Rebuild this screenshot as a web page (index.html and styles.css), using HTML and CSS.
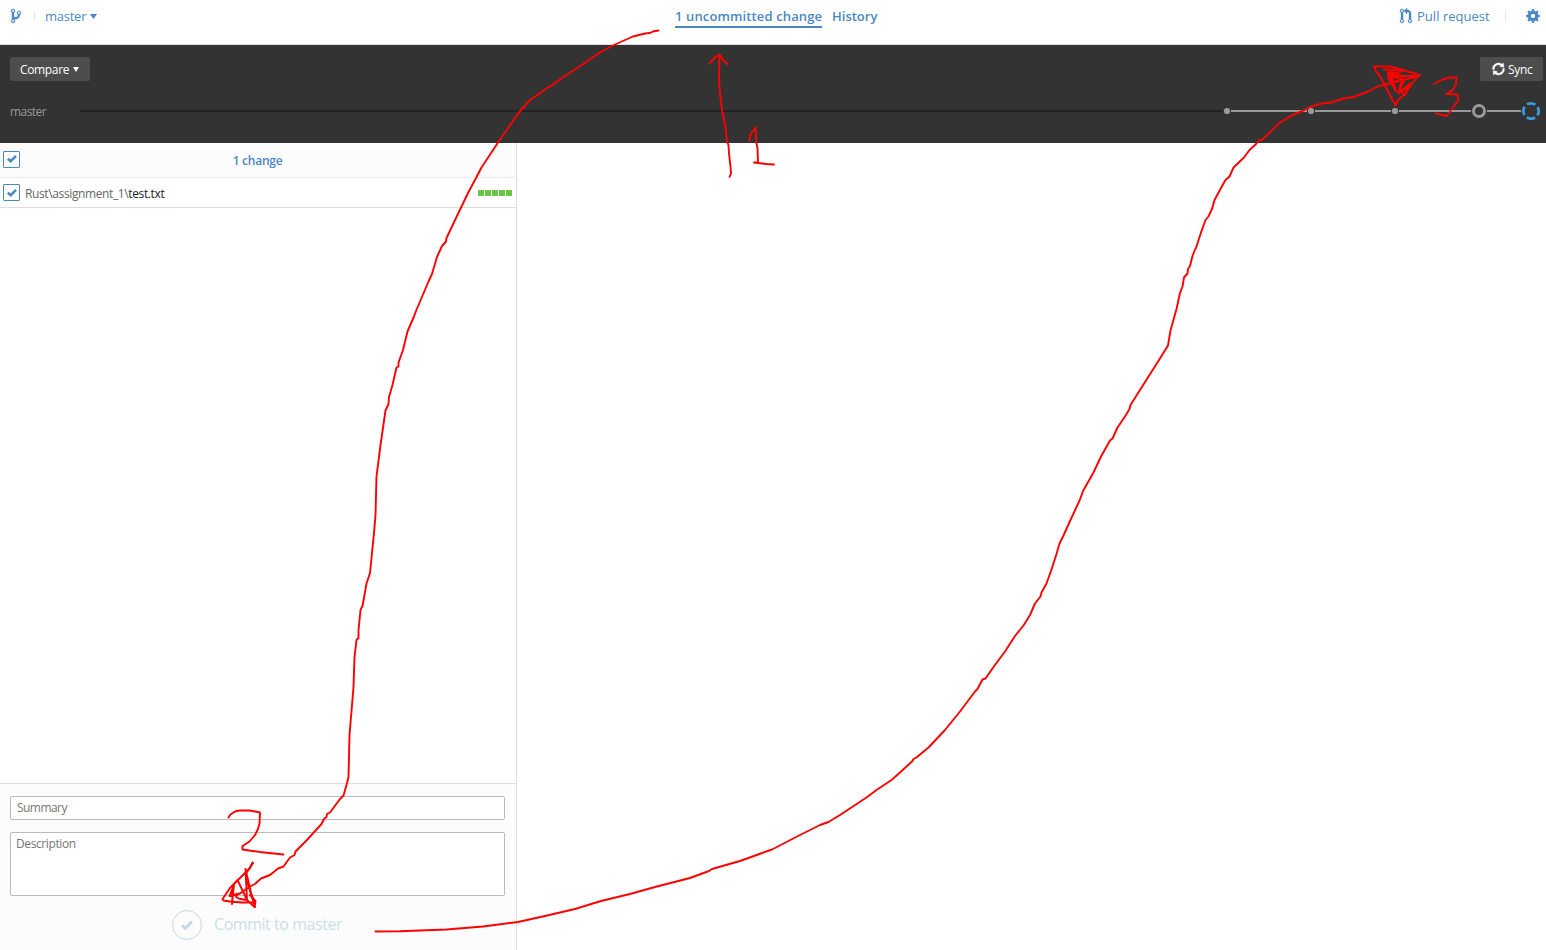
FILE: index.html
```html
<!DOCTYPE html>
<html lang="en">
<head>
<meta charset="utf-8">
<title>Changes</title>
<link rel="stylesheet" href="styles.css">
</head>
<body>
<div class="app">
  <header class="topbar">
    <div class="topbar-left">
      <svg class="icon-branch" viewBox="0 0 10 16" width="10" height="16"><path d="M10 5c0-1.11-.89-2-2-2a1.993 1.993 0 0 0-1 3.72v.3c-.02.52-.23.98-.63 1.38-.4.4-.86.61-1.38.63-.83.02-1.48.16-2 .45V4.72a1.993 1.993 0 0 0-1-3.72C.88 1 0 1.89 0 3a2 2 0 0 0 1 1.72v6.56c-.59.35-1 .99-1 1.72 0 1.11.89 2 2 2 1.11 0 2-.89 2-2 0-.53-.2-1-.53-1.36.09-.06.48-.41.59-.47.25-.11.56-.17.94-.17 1.05-.05 1.95-.45 2.75-1.25S8.95 7.77 9 6.73h-.02C9.59 6.37 10 5.73 10 5zM2 1.8c.66 0 1.2.55 1.2 1.2 0 .65-.55 1.2-1.2 1.2C1.35 4.2.8 3.65.8 3c0-.65.55-1.2 1.2-1.2zm0 12.41c-.66 0-1.2-.55-1.2-1.2 0-.65.55-1.2 1.2-1.2.65 0 1.2.55 1.2 1.2 0 .65-.55 1.2-1.2 1.2zm6-8c-.66 0-1.2-.55-1.2-1.2 0-.65.55-1.2 1.2-1.2.65 0 1.2.55 1.2 1.2 0 .65-.55 1.2-1.2 1.2z"/></svg>
      <span class="divider"></span>
      <span class="branch-name">master</span>
      <svg class="caret" viewBox="0 0 7 5" width="7" height="5"><path d="M0 0h7L3.500 5z"/></svg>
    </div>
    <nav class="tabs">
      <span class="tab tab-active">1 uncommitted change</span>
      <span class="tab tab-history">History</span>
    </nav>
    <div class="topbar-right">
      <svg class="icon-pull" viewBox="0 0 12 16" width="12" height="16"><path d="M11 11.28V5c-.03-.78-.34-1.47-.94-2.06C9.46 2.35 8.780 2.030 8 2H7V0L4 3l3 3V4h1c.27.02.48.11.69.31.21.2.3.42.31.69v6.28A1.993 1.993 0 0 0 10 15a1.993 1.993 0 0 0 1-3.72zm-1 2.92c-.66 0-1.2-.55-1.2-1.2 0-.65.55-1.2 1.2-1.2.65 0 1.2.55 1.2 1.2 0 .65-.55 1.2-1.2 1.2zM4 3c0-1.11-.89-2-2-2a1.993 1.993 0 0 0-1 3.72v6.56A1.993 1.993 0 0 0 2 15a1.993 1.993 0 0 0 1-3.72V4.72c.59-.34 1-.98 1-1.72zm-.8 10c0 .66-.55 1.2-1.2 1.2-.65 0-1.2-.55-1.2-1.2 0-.65.55-1.2 1.2-1.2.65 0 1.2.55 1.2 1.2zM2 4.2C1.34 4.2.8 3.65.8 3c0-.65.55-1.2 1.2-1.2.65 0 1.2.55 1.2 1.2 0 .65-.55 1.2-1.2 1.2z"/></svg>
      <span class="pull-label">Pull request</span>
      <span class="divider"></span>
      <svg class="icon-gear" viewBox="0 0 14 16" width="14" height="16"><path d="M14 8.77v-1.6l-1.94-.64-.45-1.09.88-1.84-1.13-1.13-1.81.91-1.09-.45-.69-1.92h-1.6l-.63 1.94-1.11.45-1.84-.88-1.13 1.13.91 1.81-.45 1.09L0 7.23v1.59l1.94.64.45 1.09-.88 1.84 1.13 1.13 1.81-.91 1.09.45.69 1.92h1.59l.63-1.94 1.11-.45 1.84.88 1.13-1.13-.92-1.81.47-1.09L14 8.75v.02zM7 10.200c-1.210 0-2.200-.990-2.200-2.200s.990-2.200 2.200-2.200 2.200.990 2.200 2.200-.990 2.200-2.200 2.200z"/></svg>
    </div>
  </header>

  <section class="timeline">
    <div class="timeline-actions">
      <div class="btn btn-compare"><span>Compare</span><svg viewBox="0 0 6 5" width="6" height="5"><path d="M0 0h6L3 5z"/></svg></div>
      <div class="btn btn-sync"><svg class="icon-sync" viewBox="0 0 12 16" width="13" height="16"><path d="M10.24 7.4a4.15 4.15 0 0 1-1.2 3.6 4.346 4.346 0 0 1-5.41.54L4.8 10.4.5 9.8l.6 4.2 1.31-1.26c2.36 1.74 5.7 1.57 7.84-.54a5.876 5.876 0 0 0 1.74-4.46l-1.75-.34zM2.96 5a4.346 4.346 0 0 1 5.41-.54L7.2 5.6l4.3.6-.6-4.2-1.31 1.26c-2.36-1.74-5.7-1.57-7.85.54C.5 5.03-.06 6.65.01 8.26l1.75.35A4.170 4.170 0 0 1 2.96 5z"/></svg><span>Sync</span></div>
    </div>
    <div class="timeline-row">
      <span class="timeline-label">master</span>
      <svg class="graph" viewBox="80 0 1466 22" width="1466" height="22">
        <path class="rail" d="M80 11H1223"/>
        <path class="link" d="M1231 11H1307M1315 11H1391M1399 11H1471M1487 11H1521"/>
        <circle class="dot" cx="1227" cy="11" r="3.100"/>
        <circle class="dot" cx="1311" cy="11" r="3.100"/>
        <circle class="dot" cx="1395" cy="11" r="3.100"/>
        <circle class="head" cx="1479" cy="11" r="5.500"/>
        <circle class="pending" cx="1531" cy="11" r="7.700"/>
      </svg>
    </div>
  </section>

  <main class="content">
    <aside class="sidebar">
      <div class="list-head">
        <span class="checkbox"><svg viewBox="0 0 10 8" width="10" height="8"><path d="M.8 3.800L3.700 6.200 9 .9"/></svg></span>
        <span class="count">1 change</span>
      </div>
      <div class="file-row">
        <span class="checkbox"><svg viewBox="0 0 10 8" width="10" height="8"><path d="M.8 3.800L3.700 6.200 9 .9"/></svg></span>
        <span class="path"><span class="dir">Rust\assignment_1\</span><span class="file">test.txt</span></span>
        <span class="diffstat"><i></i><i></i><i></i><i></i><i></i></span>
      </div>
      <div class="list-space"></div>
      <form class="commit">
        <div class="field summary">Summary</div>
        <div class="field description">Description</div>
        <div class="commit-action">
          <span class="commit-circle"><svg viewBox="0 0 12 10" width="12" height="10"><path d="M1 5.300L4.400 8.300 11 1.500"/></svg></span>
          <span class="commit-label">Commit to master</span>
        </div>
      </form>
    </aside>
    <div class="diff"></div>
  </main>

  <svg class="ink" viewBox="0 0 1546 950" width="1546" height="950">
    <polyline points="658.500,30.500 653,31.500 650,33 645,33.500 633,36.500 615,44.500 600.500,52 584,63.500 565,76 553,84.500 548,87.500 529.500,100.500 519,112.500 498,142.500 481.500,167.500 476,178 468,193 456.500,217 446.500,238 446,241.500 442,246 437,257 432,274 428.500,281.500 416,311 414,316.500 407.500,331.500 403,350 398.500,362.500 398.500,366.500 396.500,367.500 392.500,385 389,397 388.500,404 385.500,410.500 380.500,445 376.500,476.500 375.500,515 374,533 370,573 366.500,583.500 362.500,606 360.500,610 358.500,630 358.500,638 356.500,640 354.500,657 353.500,687 349.500,735 348.500,777 346.500,785 343.500,795.500 340,799 330,812.500 327,814 326.500,817 324,819 321.500,824 306.500,840.500 295.500,851.500 294.500,855 290,857.500 283.500,866.500 278,868.500 270,875 261,878.500 255,884 250,886.500 240,893.500 230,896"/>
    <polyline points="228.500,817.500 230.500,814.500 235,811.500 239.500,810.500 250,810.500 260,812.500 259.500,823.500 258,829 255,835 249.500,841.500 242.500,846 242.500,849.500 260,852 283.500,854.500"/>
    <polyline points="252.500,862.500 250,868 245,873 236,882 230,888 222.500,899 223.500,900.500 230,901.500 242,902.500 255,902.500 251,893 245.500,869 246,880 247,900 237.500,880 233,885 232,904 234,885 229.500,896 238,894 236,897 240,899 247,900 254.500,907 255.500,901 250,895"/>
    <polyline points="253,863 249,869 245.500,874 247,881 255,907"/>
    <polyline points="375.500,931.500 400,931.200 446.500,929.500 483,926.500 518,922 545,916 575,909 601,901 630,894 655,887 690,878 709,871 712,869 740,861 772,849.500 800,835 820,825 828.500,822 840,815 866.500,797.500 876.500,790 891.500,780 900,772.500 912.500,761 913.500,759 916.500,757.500 928.500,747.500 945,730 960,711.500 975,691.500 977.500,689 982.500,679.500 985.500,678.500 993.500,667 1005,651.500 1015,636 1023.500,625.500 1030,615 1035,603.500 1040.500,596.500 1041.500,592.500 1046.500,583.500 1051.500,569.500 1056.500,554 1059.500,543.500 1063.500,535.500 1070,521 1080,499.500 1083,491 1093.500,472.500 1101,456.500 1110,440.500 1112.500,438.500 1117.500,427.500 1125,416.500 1129.500,409 1130.500,405 1140,390 1159,360 1164,352 1168,345.500 1170.500,330.500 1176.500,309 1180,293 1182.500,286.500 1184,277.500 1187.500,273.500 1188,269 1190,266 1192.500,256 1195,249.500 1196,248 1201.500,231 1205.500,220 1208.500,216.500 1212.500,207.500 1214.500,200 1220.500,189 1225.500,180 1229.500,176.500 1233.500,167.500 1244,157.500 1249.500,150 1256,144 1259,140.500 1262.500,139.500 1275,127.500 1280,122.500 1293.500,114.500 1302.500,111 1310,107 1321.500,103.500 1331.500,102.500 1343.500,98.500 1353.500,97 1368.500,91.500 1377.500,86.500 1393.500,82.500 1418.500,76"/>
    <polyline points="1420.500,75.500 1406.500,71 1390,66.500 1374,66.500 1376,71.500 1380,76 1395.500,105.500 1398,100 1405,94 1411,85 1417,77"/>
    <polyline points="1383.500,69.500 1403,70.500 1388,76.500 1391,72 1395,90.500 1388,72 1389,80 1396,91 1390,71.500 1403,76.500 1398,93.500 1410,83.500 1405,95 1401,92 1408,87 1399,91 1404,80 1394,82 1401,79 1390,76 1414,76"/>
    <polyline points="1434.500,83.500 1442.500,79.500 1449.500,77.500 1456.500,77.500 1456,85 1452,90.500 1446,94 1457.500,94.500 1458.500,100 1452.500,108.500 1446.500,116 1436,113.500"/>
    <polyline points="729.500,177 731,173.500 730.500,166.500 729,153.500 728.500,145 727,141.500 725.500,126.500 722,110 720,93.500 719,80 719.500,55"/>
    <polyline points="709.500,63.500 715,57.500 719.500,54.500 723.500,60.500 727.500,64"/>
    <polyline points="749.500,141 750,135 755.500,127.500 756.500,143.500 757.500,148 758,162.500 754,162.500 766.500,164 774,164.500"/>
  </svg>
</div>
</body>
</html>
```

FILE: styles.css
```css
* { box-sizing: border-box; }
body { margin: 0; font-family: "Open Sans", "Noto Sans", sans-serif; font-size: 12px; background: #fff; }
svg { display: block; flex: none; }
span { white-space: nowrap; }

.app { position: relative; width: 1546px; height: 950px; overflow: hidden; display: flex; flex-direction: column; }

.topbar { height: 45px; padding-bottom: 12px; border-bottom: 1px solid #ddd; display: grid; grid-template-columns: 675px 1fr auto; color: #4a88c3; fill: #4a88c3; font-size: 13px; line-height: 18px; }
.topbar-left, .topbar-right { display: flex; align-items: center; height: 32px; }
.topbar-left { padding-left: 11px; }
.icon-branch, .icon-pull { stroke: #4a88c3; stroke-width: 0.35; overflow: visible; }
.icon-sync { stroke: #fff; stroke-width: 0.4; overflow: visible; }
.divider { width: 1px; height: 18px; background: linear-gradient(#fff, #ddd, #fff); }
.topbar-left .divider { margin: 0 10px 0 13px; }
.branch-name { width: 42px; letter-spacing: -0.25px; }
.caret { margin-left: 3px; }
.tabs { display: flex; align-items: flex-start; gap: 10px; padding-top: 7px; font-weight: 600; }
.tab { height: 21px; }
.tab-active { width: 147px; border-bottom: 2px solid #4a88c3; letter-spacing: 0.13px; }
.topbar-right { padding-right: 6px; }
.pull-label { width: 73px; margin-left: 5px; letter-spacing: 0.03px; }
.topbar-right .divider { margin: 0 20px 0 15px; }

.timeline { height: 98px; background: #333; padding-top: 12px; flex: none; }
.timeline-actions { display: flex; justify-content: space-between; padding: 0 3px 0 10px; }
.btn { height: 24px; border-radius: 2px; background: #4d4d4d; color: #fff; fill: #fff; display: flex; align-items: center; font-size: 12px; font-weight: 500; }
.btn-compare { width: 80px; padding-left: 10px; gap: 5px; }
.btn-compare span { width: 48px; letter-spacing: -0.35px; }
.btn-sync { width: 63px; padding-left: 12px; gap: 3px; }
.btn-sync span { letter-spacing: -0.3px; }
.timeline-row { display: flex; align-items: center; height: 22px; margin-top: 19px; }
.timeline-label { width: 80px; padding-left: 10px; color: #999; letter-spacing: -0.55px; }
.rail { stroke: #222; stroke-width: 2; }
.link { stroke: #999; stroke-width: 2; }
.dot { fill: #999; }
.head { fill: none; stroke: #999; stroke-width: 3; }
.pending { fill: none; stroke: #3a9ade; stroke-width: 2.800; stroke-dasharray: 8.800 3.295; stroke-dashoffset: 4.400; }

.content { flex: 1; display: flex; min-height: 0; }
.sidebar { width: 517px; border-right: 1px solid #ddd; display: flex; flex-direction: column; }
.diff { flex: 1; }
.list-head { height: 35px; border-bottom: 1px solid #eee; background: #fcfcfc; display: flex; align-items: center; padding: 0 0 2px 3px; }
.checkbox { width: 17px; height: 17px; border: 1px solid #4a88c3; border-radius: 1px; background: #fff; display: flex; align-items: center; justify-content: center; }
.checkbox path { fill: none; stroke: #4a88c3; stroke-width: 2.500; }
.count { flex: 1; text-align: center; padding-top: 2px; padding-right: 22px; margin-left: 1px; color: #4a88c3; font-weight: 600; letter-spacing: -0.25px; }
.file-row { height: 30px; border-bottom: 1px solid #ddd; display: flex; align-items: center; padding: 0 4px 0 3px; }
.path { margin-left: 5px; padding-top: 2px; letter-spacing: -0.38px; }
.dir { color: #666; }
.file { color: #222; }
.diffstat { display: flex; gap: 1px; margin-left: auto; }
.diffstat i { width: 6px; height: 6px; background: #6cc644; }
.list-space { flex: 1; }
.commit { height: 167px; border-top: 1px solid #ddd; background: #fcfcfc; padding: 12px 11px 0 10px; }
.field { border: 1px solid #bbb; border-radius: 2px; background: #fff; color: #767676; line-height: 16px; letter-spacing: -0.4px; }
.summary { height: 24px; padding: 3px 6px; margin-bottom: 12px; letter-spacing: -0.55px; }
.description { height: 64px; padding: 3px 5px; }
.commit-action { display: flex; align-items: center; gap: 12px; padding: 14px 0 0 162px; color: #cbdcec; font-size: 16px; }
.commit-circle { width: 30px; height: 30px; border: 1px solid #c5d8ea; border-radius: 50%; display: flex; align-items: center; justify-content: center; }
.commit-circle path { fill: none; stroke: #c5d8ea; stroke-width: 3; }
.commit-label { letter-spacing: -0.45px; margin-top: -3px; }

.ink { position: absolute; left: 0; top: 0; pointer-events: none; }
.ink polyline { fill: none; stroke: #f00; stroke-width: 1.900; stroke-linejoin: round; stroke-linecap: round; }
```
